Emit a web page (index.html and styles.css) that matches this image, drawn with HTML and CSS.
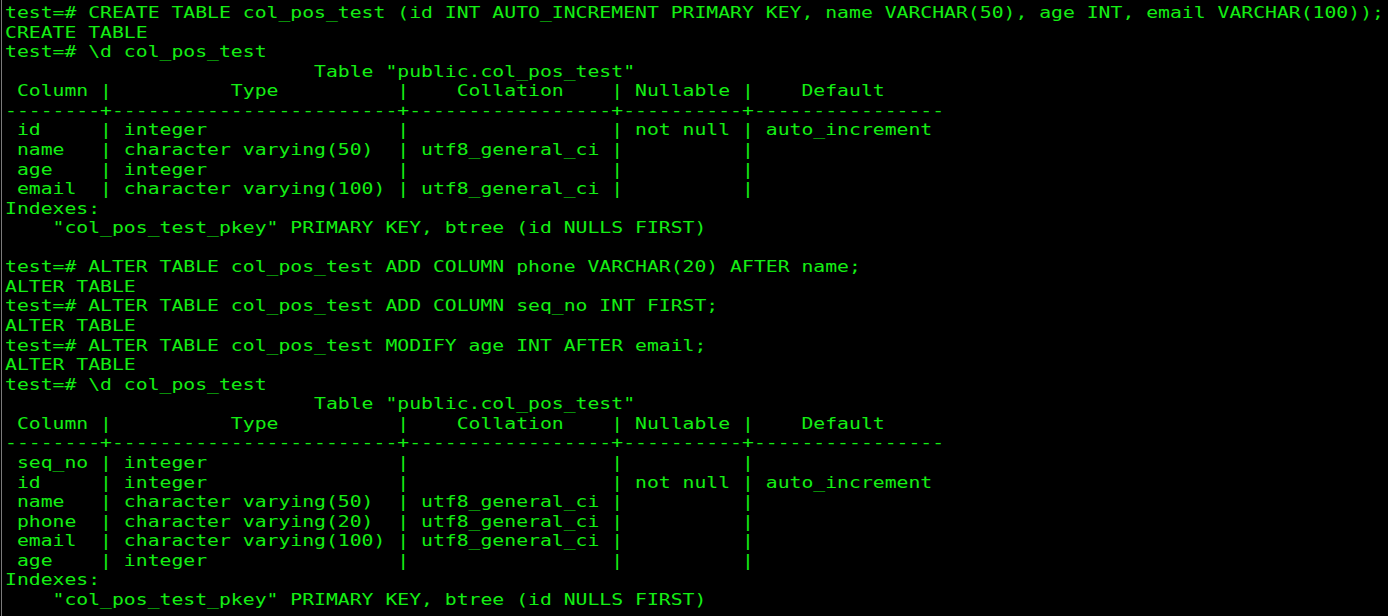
FILE: index.html
```html
<!DOCTYPE html>
<html>
<head>
<meta charset="utf-8">
<link rel="stylesheet" href="styles.css">
</head>
<body>
<div class="term">
<pre class="screen">test=# CREATE TABLE col_pos_test (id INT AUTO_INCREMENT PRIMARY KEY, name VARCHAR(50), age INT, email VARCHAR(100));
CREATE TABLE
test=# \d col_pos_test
                          Table "public.col_pos_test"
 Column |          Type          |    Collation    | Nullable |    Default
--------+------------------------+-----------------+----------+----------------
 id     | integer                |                 | not null | auto_increment
 name   | character varying(50)  | utf8_general_ci |          |
 age    | integer                |                 |          |
 email  | character varying(100) | utf8_general_ci |          |
Indexes:
    "col_pos_test_pkey" PRIMARY KEY, btree (id NULLS FIRST)

test=# ALTER TABLE col_pos_test ADD COLUMN phone VARCHAR(20) AFTER name;
ALTER TABLE
test=# ALTER TABLE col_pos_test ADD COLUMN seq_no INT FIRST;
ALTER TABLE
test=# ALTER TABLE col_pos_test MODIFY age INT AFTER email;
ALTER TABLE
test=# \d col_pos_test
                          Table "public.col_pos_test"
 Column |          Type          |    Collation    | Nullable |    Default
--------+------------------------+-----------------+----------+----------------
 seq_no | integer                |                 |          |
 id     | integer                |                 | not null | auto_increment
 name   | character varying(50)  | utf8_general_ci |          |
 phone  | character varying(20)  | utf8_general_ci |          |
 email  | character varying(100) | utf8_general_ci |          |
 age    | integer                |                 |          |
Indexes:
    "col_pos_test_pkey" PRIMARY KEY, btree (id NULLS FIRST)</pre>
</div>
</body>
</html>
```
FILE: styles.css
```css
html, body {
  margin: 0;
  padding: 0;
  background: #000;
  overflow: hidden;
  width: 1388px;
  height: 616px;
}
.term {
  box-sizing: border-box;
  height: 616px;
  margin-left: 1px;
  border-left: 1px solid #7a7a7a;
  padding: 4px 0 0 3px;
}
.screen {
  margin: 0;
  width: max-content;
  font-family: "DejaVu Sans Mono", monospace;
  font-size: 15px;
  line-height: 19.57px;
  color: #14ee14;
  white-space: pre;
  transform: scaleX(1.3163);
  transform-origin: left top;
}
```
